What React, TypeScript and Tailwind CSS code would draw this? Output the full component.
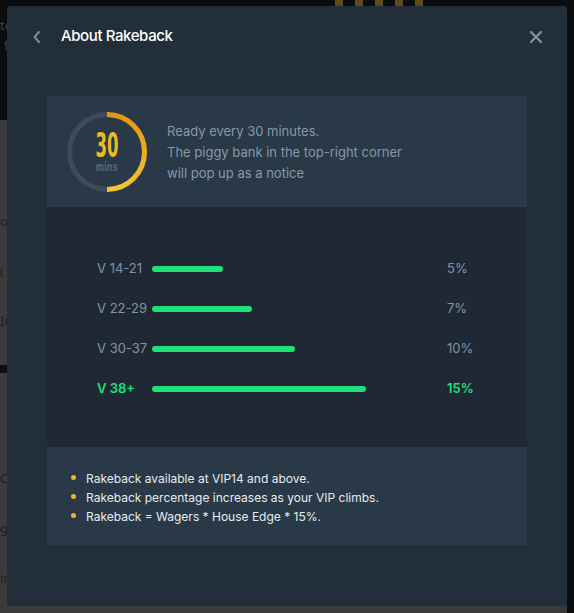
import React from "react";

type Tier = {
  label: string;
  width: number;
  pct: string;
  active?: boolean;
};

const tiers: Tier[] = [
  { label: "V 14-21", width: 71, pct: "5%" },
  { label: "V 22-29", width: 100, pct: "7%" },
  { label: "V 30-37", width: 143, pct: "10%" },
  { label: "V 38+", width: 214, pct: "15%", active: true },
];

const notes = [
  "Rakeback available at VIP14 and above.",
  "Rakeback percentage increases as your VIP climbs.",
  "Rakeback = Wagers * House Edge * 15%.",
];

const font = { fontFamily: "Inter, 'Liberation Sans', sans-serif" };

// countdown ring, half filled
const TimerRing = () => (
  <svg width="82" height="82" viewBox="0 0 82 82">
    <defs>
      <linearGradient id="ringGrad" x1="0" y1="0" x2="0" y2="1">
        <stop offset="0%" stopColor="#e8950c" />
        <stop offset="100%" stopColor="#f3c336" />
      </linearGradient>
    </defs>
    <circle cx="41" cy="41" r="37.5" fill="none" stroke="#3d4c5b" strokeWidth="5" />
    <path
      d="M41 3.5 A37.5 37.5 0 0 1 41 78.5"
      fill="none"
      stroke="url(#ringGrad)"
      strokeWidth="5"
    />
    <text
      x="29.5"
      y="45.5"
      textLength="23"
      lengthAdjust="spacingAndGlyphs"
      fill="#f0b825"
      fontSize="34"
      fontWeight="600"
      fontFamily="'Liberation Sans Narrow', 'DejaVu Sans Condensed', sans-serif"
    >
      30
    </text>
    <text
      x="29.5"
      y="60"
      textLength="22"
      lengthAdjust="spacingAndGlyphs"
      fill="#55657a"
      fontSize="13"
      fontWeight="700"
      fontFamily="'DejaVu Sans Condensed', 'Liberation Sans Narrow', sans-serif"
    >
      mins
    </text>
  </svg>
);

const Backdrop = () => (
  <div className="absolute inset-0 flex flex-col text-[13px] text-[#1f1f1f]" style={{ fontFamily: "'Noto Sans', sans-serif" }}>
    <div className="h-[120px] bg-[#0a0d10] pt-[16px] text-[#3a3f44]">
      <div className="h-[20px]">te</div>
      <div className="h-[20px] pl-[4px]">f</div>
    </div>
    <div className="h-[245px] bg-[#3b3b3b] pt-[92px]">
      <div className="h-[50px]">ot</div>
      <div className="h-[50px]">(</div>
      <div className="h-[40px]">IC</div>
    </div>
    <div className="h-[8px] bg-[#0d0f12]" />
    <div className="flex-1 bg-[#3b3b3b] pt-[96px]">
      <div className="h-[50px]">C</div>
      <div className="h-[50px]">ge</div>
      <div className="h-[40px]">ir</div>
    </div>
    <div className="absolute top-0 left-[335px] flex gap-[12px]">
      <div className="h-[6px] w-[8px] bg-[#5a4a1c]" />
      <div className="h-[6px] w-[8px] bg-[#5a4a1c]" />
      <div className="h-[6px] w-[8px] bg-[#5a4a1c]" />
      <div className="h-[6px] w-[8px] bg-[#5a4a1c]" />
      <div className="h-[6px] w-[8px] bg-[#5a4a1c]" />
    </div>
    <div className="absolute top-0 right-0 bottom-0 w-[7px] bg-[#0a0d10]" />
  </div>
);

const App = () => {
  return (
    <div className="relative w-[574px] h-[613px] overflow-hidden bg-[#0a0d10]" style={font}>
      <Backdrop />

      {/* modal */}
      <div className="absolute left-[7px] top-[6px] w-[560px] h-[600px] rounded-[3px] bg-[#222e3a] flex flex-col">
        <div className="h-[60px] flex flex-row items-center px-[26px] pt-[1px]">
          <svg width="8" height="12" viewBox="0 0 8 12">
            <path d="M6 1 L1.5 6 L6 11" fill="none" stroke="#7a8da0" strokeWidth="2" strokeLinecap="round" strokeLinejoin="round" />
          </svg>
          <span className="ml-[20px] text-[15px] font-medium text-white tracking-[-0.4px]">About Rakeback</span>
          <svg width="14" height="14" viewBox="0 0 14 14" className="ml-auto mr-[-2px]">
            <path d="M2 2 L12 12 M12 2 L2 12" stroke="#7f93a4" strokeWidth="2.2" strokeLinecap="round" />
          </svg>
        </div>

        <div className="mx-[40px] mt-[30px] w-[480px] flex flex-col">
          <div className="h-[111px] bg-[#2a3947] flex flex-row items-center pl-[19px]">
            <TimerRing />
            <div className="ml-[19px] text-[13px] leading-[21px] text-[#8898a8] mt-[1px]">
              <div>Ready every 30 minutes.</div>
              <div>The piggy bank in the top-right corner</div>
              <div>will pop up as a notice</div>
            </div>
          </div>

          <div className="h-[240px] bg-[#1f2935] flex flex-col pt-[52px] pl-[50px] gap-[20px]">
            {tiers.map((t) => (
              <div key={t.label} className="h-[20px] flex flex-row items-center">
                <span
                  className={
                    t.active
                      ? "w-[55px] text-[13px] font-semibold text-[#22e07a]"
                      : "w-[55px] text-[13px] text-[#8394a4]"
                  }
                >
                  {t.label}
                </span>
                <div className="w-[295px]">
                  <div className="h-[6px] rounded-full bg-[#20e07c]" style={{ width: t.width }} />
                </div>
                <span
                  className={
                    t.active
                      ? "text-[13px] font-semibold text-[#22e07a]"
                      : "text-[13px] text-[#8394a4]"
                  }
                >
                  {t.pct}
                </span>
              </div>
            ))}
          </div>

          <div className="h-[98px] bg-[#2a3947] pt-[22px] pl-[24px]">
            {notes.map((n) => (
              <div key={n} className="h-[19px] flex flex-row items-center">
                <div className="w-[5px] h-[5px] rounded-full bg-[#f0b429] -mt-[3px]" />
                <span className="ml-[10px] text-[12px] text-[#e6ebef]">{n}</span>
              </div>
            ))}
          </div>
        </div>
      </div>
    </div>
  );
};

export default App;
